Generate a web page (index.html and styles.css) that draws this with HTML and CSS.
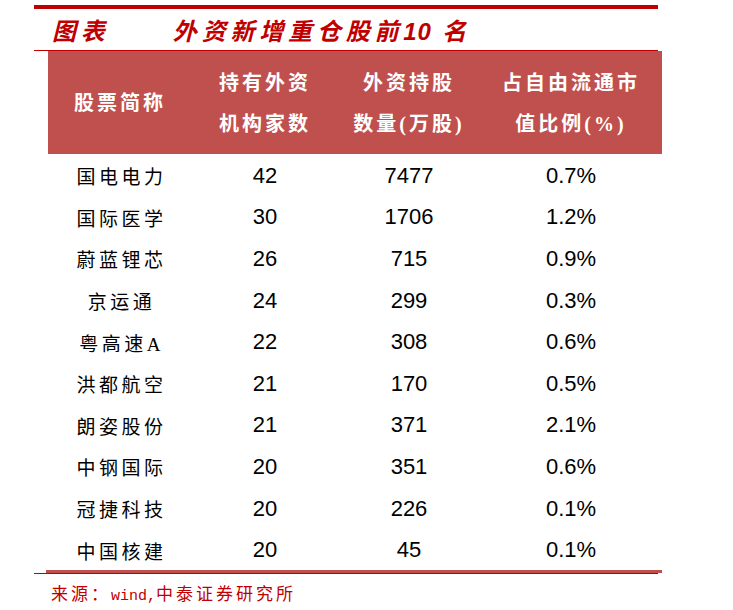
FILE: index.html
```html
<!DOCTYPE html>
<html lang="zh-CN">
<head>
  <meta charset="UTF-8" />
  <title>外资新增重仓股前10名</title>
  <link rel="stylesheet" href="styles.css">
</head>
<body>
  <div class="page">
    <div class="rule-top"></div>
    <div class="title">
      <span class="title-tag">图表</span>
      <span class="title-text">外资新增重仓股前<span class="num">10</span> 名</span>
    </div>
    <div class="rule-thin"></div>

    <div class="table">
      <div class="head">
        <div class="hcell">股票简称</div>
        <div class="hcell">持有外资<br>机构家数</div>
        <div class="hcell">外资持股<br>数量(万股)</div>
        <div class="hcell">占自由流通市<br>值比例(%)</div>
      </div>
      <div id="rows"></div>
    </div>
    <div class="rule-bottom"></div>
    <div class="rule-thin"></div>

    <div class="source">来源：<span class="mono">wind,</span>中泰证券研究所</div>
  </div>

  <script>
    const stocks = [
      ["国电电力", 42, 7477, "0.7%"],
      ["国际医学", 30, 1706, "1.2%"],
      ["蔚蓝锂芯", 26, 715, "0.9%"],
      ["京运通", 24, 299, "0.3%"],
      ["粤高速A", 22, 308, "0.6%"],
      ["洪都航空", 21, 170, "0.5%"],
      ["朗姿股份", 21, 371, "2.1%"],
      ["中钢国际", 20, 351, "0.6%"],
      ["冠捷科技", 20, 226, "0.1%"],
      ["中国核建", 20, 45, "0.1%"]
    ];

    const rows = document.getElementById("rows");
    stocks.forEach(s => {
      const row = document.createElement("div");
      row.className = "row";
      row.innerHTML = `
        <div class="cell name">${s[0]}</div>
        <div class="cell">${s[1]}</div>
        <div class="cell">${s[2]}</div>
        <div class="cell">${s[3]}</div>
      `;
      rows.appendChild(row);
    });
  </script>
</body>
</html>
```

FILE: styles.css
```css
body {
  margin: 0;
  background: #fff;
  font-family: "Liberation Serif", "Noto Sans CJK SC", serif;
  color: #000;
}

.page {
  padding-top: 5px;
  width: 733px;
}

.rule-top {
  margin-left: 34px;
  width: 624px;
  height: 4px;
  background: #c00000;
}

.title {
  height: 41px;
  line-height: 41px;
  margin-left: 52px;
  font-family: "Noto Sans CJK SC", sans-serif;
  font-size: 24px;
  font-weight: 700;
  font-style: italic;
  letter-spacing: 4.8px;
  color: #c00000;
  white-space: nowrap;
}
.title-text {
  margin-left: 53px;
}
.title .num {
  font-family: "Liberation Sans", sans-serif;
  letter-spacing: 1px;
}

.rule-thin {
  margin-left: 34px;
  width: 624px;
  height: 1px;
  background: #c00000;
}

.table {
  margin-left: 48px;
  width: 614px;
}

.head,
.row {
  display: grid;
  grid-template-columns: 144px 146px 142px 182px;
}

.head {
  height: 103px;
  background: #c0504d;
  align-items: center;
  padding-top: 2px;
  box-sizing: border-box;
}
.hcell {
  text-align: center;
  color: #fff;
  font-family: "Liberation Serif", "Noto Sans CJK SC", serif;
  font-weight: 700;
  font-size: 20px;
  line-height: 41px;
  letter-spacing: 3px;
}

.row {
  height: 41.6px;
  align-items: center;
}
.cell {
  text-align: center;
  font-family: "Liberation Sans", sans-serif;
  font-size: 22px;
  padding-top: 2px;
}
.cell.name {
  font-family: "Liberation Serif", "Noto Sans CJK SC", serif;
  font-size: 19px;
  letter-spacing: 3.5px;
  padding-left: 3px;
}

.rule-bottom {
  margin-left: 46px;
  width: 616px;
  height: 3px;
  background: #c0504d;
}

.source {
  margin: 7px 0 0 51px;
  font-family: "Noto Sans CJK SC", sans-serif;
  font-size: 17px;
  line-height: 24px;
  letter-spacing: 3px;
  color: #c00000;
}
.source .mono {
  font-family: "Liberation Mono", monospace;
  font-size: 15px;
  letter-spacing: 0;
}
```
